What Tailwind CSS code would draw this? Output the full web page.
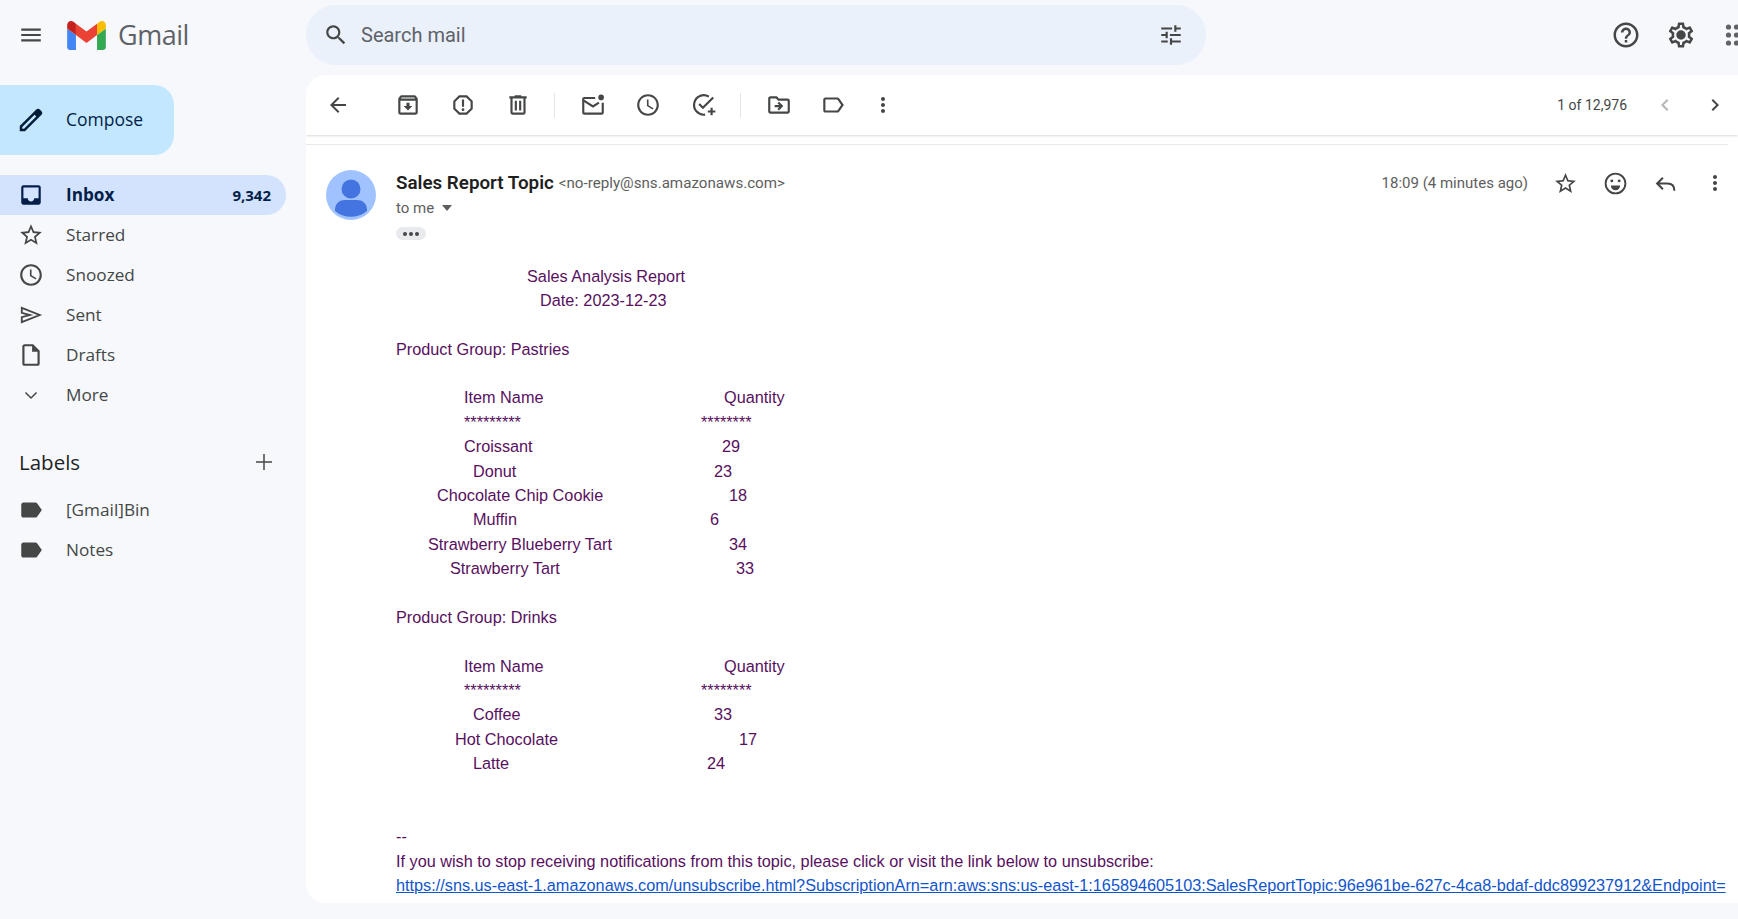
<!DOCTYPE html>
<html><head><meta charset="utf-8"><title>Gmail</title>
<script src="https://cdn.jsdelivr.net/npm/@tailwindcss/browser@4"></script></head>
<body class="w-[1738px] h-[919px] overflow-hidden bg-[#f6f8fc] font-['Roboto',sans-serif] text-[#202124]">
<header class="h-[70px] flex items-center">
  <div class="w-[306px] shrink-0 flex items-center">
    <svg class="ml-[18px] w-[26px] h-[26px] fill-[#444746]" viewBox="0 0 24 24"><path d="M3 18h18v-2H3v2zm0-5h18v-2H3v2zm0-7v2h18V6H3z"/></svg>
    <svg class="ml-[23px] w-[39px] h-[29px]" viewBox="52 42 88 66"><path fill="#4285f4" d="M58 108h14V74L52 59v43c0 3.32 2.69 6 6 6"/><path fill="#34a853" d="M120 108h14c3.32 0 6-2.69 6-6V59l-20 15"/><path fill="#fbbc04" d="M120 48v26l20-15v-8c0-7.42-8.47-11.65-14.4-7.2"/><path fill="#ea4335" d="M72 74V48l24 18 24-18v26L96 92"/><path fill="#c5221f" d="M52 51v8l20 15V48l-5.6-4.2c-5.94-4.45-14.4-.22-14.4 7.2"/></svg>
    <span class="ml-[12px] text-[27px] text-[#5f6368] font-['Open_Sans',sans-serif] tracking-[-0.5px]">Gmail</span>
  </div>
  <div class="w-[900px] h-[60px] rounded-full bg-[#eaf1fb] flex items-center">
    <svg class="ml-[17px] w-[26px] h-[26px] fill-[#444746]" viewBox="0 0 24 24"><path d="M15.5 14h-.79l-.28-.27C15.41 12.59 16 11.11 16 9.5 16 5.91 13.09 3 9.5 3S3 5.91 3 9.5 5.91 16 9.5 16c1.61 0 3.09-.59 4.23-1.57l.27.28v.79l5 4.99L20.49 19l-4.99-5zm-6 0C7.01 14 5 11.99 5 9.5S7.01 5 9.5 5 14 7.01 14 9.5 11.99 14 9.5 14z"/></svg>
    <span class="ml-[12px] text-[20px] text-[#5f6368]">Search mail</span>
    <svg class="ml-auto mr-[22px] w-[26px] h-[26px] fill-[#444746]" viewBox="0 0 24 24"><path d="M3 17v2h6v-2H3zM3 5v2h10V5H3zm10 16v-2h8v-2h-8v-2h-2v6h2zM7 9v2H3v2h4v2h2V9H7zm14 4v-2H11v2h10zm-6-4h2V7h4V5h-4V3h-2v6z"/></svg>
  </div>
  <div class="ml-auto flex items-center">
    <svg class="w-[30px] h-[30px] fill-[#444746]" viewBox="0 0 24 24"><path d="M11 18h2v-2h-2v2zm1-16C6.48 2 2 6.48 2 12s4.48 10 10 10 10-4.48 10-10S17.52 2 12 2zm0 18c-4.41 0-8-3.59-8-8s3.59-8 8-8 8 3.59 8 8-3.59 8-8 8zm0-14c-2.21 0-4 1.79-4 4h2c0-1.1.9-2 2-2s2 .9 2 2c0 2-3 1.75-3 5h2c0-2.25 3-2.5 3-5 0-2.21-1.79-4-4-4z"/></svg>
    <svg class="ml-[25px] w-[30px] h-[30px] fill-[#444746]" viewBox="0 0 24 24"><path d="M19.43 12.98c.04-.32.07-.64.07-.98 0-.34-.03-.66-.07-.98l2.11-1.65c.19-.15.24-.42.12-.64l-2-3.46c-.09-.16-.26-.25-.44-.25-.06 0-.12.01-.17.03l-2.49 1c-.52-.4-1.08-.73-1.69-.98l-.38-2.65C14.46 2.18 14.25 2 14 2h-4c-.25 0-.46.18-.49.42l-.38 2.65c-.61.25-1.17.59-1.69.98l-2.49-1c-.06-.02-.12-.03-.18-.03-.17 0-.34.09-.43.25l-2 3.46c-.13.22-.07.49.12.64l2.11 1.65c-.04.32-.07.65-.07.98 0 .33.03.66.07.98l-2.11 1.65c-.19.15-.24.42-.12.64l2 3.46c.09.16.26.25.44.25.06 0 .12-.01.17-.03l2.49-1c.52.4 1.08.73 1.69.98l.38 2.65c.03.24.24.42.49.42h4c.25 0 .46-.18.49-.42l.38-2.65c.61-.25 1.17-.59 1.69-.98l2.49 1c.06.02.12.03.18.03.17 0 .34-.09.43-.25l2-3.46c.12-.22.07-.49-.12-.64l-2.11-1.65zm-1.98-1.71c.04.31.05.52.05.73 0 .21-.02.43-.05.73l-.14 1.13.89.7 1.08.84-.7 1.21-1.27-.51-1.04-.42-.9.68c-.43.32-.84.56-1.25.73l-1.06.43-.16 1.13-.2 1.35h-1.4l-.19-1.35-.16-1.13-1.06-.43c-.43-.18-.83-.41-1.23-.71l-.91-.7-1.06.43-1.27.51-.7-1.21 1.08-.84.89-.7-.14-1.13c-.03-.31-.05-.54-.05-.74s.02-.43.05-.73l.14-1.13-.89-.7-1.08-.84.7-1.21 1.27.51 1.04.42.9-.68c.43-.32.84-.56 1.25-.73l1.06-.43.16-1.13.2-1.35h1.39l.19 1.35.16 1.13 1.06.43c.43.18.83.41 1.23.71l.91.7 1.06-.43 1.27-.51.7 1.21-1.07.85-.89.7.14 1.13zM12 8.2a3.8 3.8 0 100 7.6 3.8 3.8 0 000-7.6z"/></svg>
    <svg class="ml-[28px] mr-[-1px] w-[15px] h-[26px] fill-[#5f6368]" viewBox="0 0 15 26"><circle cx="4.5" cy="5" r="2.6"/><circle cx="12.5" cy="5" r="2.6"/><circle cx="4.5" cy="13" r="2.6"/><circle cx="12.5" cy="13" r="2.6"/><circle cx="4.5" cy="21" r="2.6"/><circle cx="12.5" cy="21" r="2.6"/></svg>
  </div>
</header>
<div class="flex">
  <aside class="w-[306px] shrink-0 font-['Open_Sans',sans-serif]">
    <div class="mt-[15px] w-[174px] h-[70px] rounded-r-[20px] bg-[#c2e7ff] flex items-center text-[#041e49] text-[17.5px] font-medium">
      <svg class="ml-[16px] w-[30px] h-[30px] fill-[#001d35]" viewBox="0 0 24 24"><path d="M20.41 4.94l-1.35-1.35c-.78-.78-2.05-.78-2.83 0L3 16.82V21h4.18L20.41 7.77c.79-.78.79-2.05 0-2.83zM6.41 19.06L5 19v-1.36l9.82-9.82 1.41 1.41-9.82 9.83z"/></svg>
      <span class="ml-[20px] mb-[2px]">Compose</span>
    </div>
    <nav class="mt-[20px] text-[17.2px] text-[#444746]">
      <div class="w-[286px] h-[40px] rounded-r-full bg-[#d3e3fd] flex items-center text-[#041e49] font-bold">
        <svg class="ml-[18px] w-[26px] h-[26px] fill-[#041e49]" viewBox="0 0 24 24"><path d="M19 3H5c-1.1 0-2 .9-2 2v14c0 1.1.9 2 2 2h14c1.1 0 2-.9 2-2V5c0-1.1-.9-2-2-2zm0 12h-4c0 1.66-1.35 3-3 3s-3-1.34-3-3H5V5h14v10z"/></svg>
        <span class="ml-[22px]">Inbox</span><span class="ml-auto mr-[15px] text-[15px]">9,342</span>
      </div>
      <div class="w-[286px] h-[40px] flex items-center">
        <svg class="ml-[18px] w-[26px] h-[26px] fill-[#444746]" viewBox="0 0 24 24"><path d="M22 9.24l-7.19-.62L12 2 9.19 8.63 2 9.24l5.46 4.73L5.82 21 12 17.27 18.18 21l-1.63-7.03L22 9.24zM12 15.4l-3.76 2.27 1-4.28-3.32-2.88 4.38-.38L12 6.1l1.71 4.04 4.38.38-3.32 2.88 1 4.28L12 15.4z"/></svg>
        <span class="ml-[22px]">Starred</span>
      </div>
      <div class="w-[286px] h-[40px] flex items-center">
        <svg class="ml-[18px] w-[26px] h-[26px] fill-[#444746]" viewBox="0 0 24 24"><path d="M11.99 2C6.47 2 2 6.48 2 12s4.47 10 9.99 10C17.52 22 22 17.52 22 12S17.52 2 11.99 2zM12 20c-4.42 0-8-3.58-8-8s3.58-8 8-8 8 3.58 8 8-3.58 8-8 8zm.5-13H11v6l5.25 3.15.75-1.23-4.5-2.67z"/></svg>
        <span class="ml-[22px]">Snoozed</span>
      </div>
      <div class="w-[286px] h-[40px] flex items-center">
        <svg class="ml-[18px] w-[26px] h-[26px] fill-none stroke-[#444746] stroke-[1.7]" viewBox="0 0 24 24"><path d="M3.5 5.5 20 12 3.5 18.5V14L11 12 3.5 10z"/></svg>
        <span class="ml-[22px]">Sent</span>
      </div>
      <div class="w-[286px] h-[40px] flex items-center">
        <svg class="ml-[18px] w-[26px] h-[26px] fill-[#444746]" viewBox="0 0 24 24"><path d="M14 2H6c-1.1 0-2 .9-2 2v16c0 1.1.9 2 2 2h12c1.1 0 2-.9 2-2V8l-6-6zM6 20V4h7v5h5v11H6z"/></svg>
        <span class="ml-[22px]">Drafts</span>
      </div>
      <div class="w-[286px] h-[40px] flex items-center">
        <svg class="ml-[18px] w-[26px] h-[26px] fill-[#444746]" viewBox="0 0 24 24"><path d="M7.4 9.2 12 13.8l4.6-4.6 1 1L12 15.8l-5.6-5.6z"/></svg>
        <span class="ml-[22px]">More</span>
      </div>
    </nav>
    <div class="mt-[27px] h-[40px] w-[286px] flex items-center text-[20.5px] text-[#1f1f1f]">
      <span class="ml-[19px]">Labels</span>
      <svg class="ml-auto mr-[10px] w-[24px] h-[24px] fill-[#444746]" viewBox="0 0 24 24"><path d="M20 12.75h-7.25V20h-1.5v-7.25H4v-1.5h7.25V4h1.5v7.25H20z"/></svg>
    </div>
    <div class="mt-[8px] text-[17.2px] text-[#444746]">
      <div class="w-[286px] h-[40px] flex items-center">
        <svg class="ml-[18px] w-[26px] h-[26px] fill-[#444746]" viewBox="0 0 24 24"><path d="M17.63 5.84C17.27 5.33 16.67 5 16 5L5 5.01C3.9 5.01 3 5.9 3 7v10c0 1.1.9 1.99 2 1.99L16 19c.67 0 1.27-.33 1.63-.84L22 12l-4.37-6.16z"/></svg>
        <span class="ml-[22px]">[Gmail]Bin</span>
      </div>
      <div class="w-[286px] h-[40px] flex items-center">
        <svg class="ml-[18px] w-[26px] h-[26px] fill-[#444746]" viewBox="0 0 24 24"><path d="M17.63 5.84C17.27 5.33 16.67 5 16 5L5 5.01C3.9 5.01 3 5.9 3 7v10c0 1.1.9 1.99 2 1.99L16 19c.67 0 1.27-.33 1.63-.84L22 12l-4.37-6.16z"/></svg>
        <span class="ml-[22px]">Notes</span>
      </div>
    </div>
  </aside>
  <main class="mt-[5px] w-[1432px] h-[828px] rounded-l-[20px] bg-white overflow-hidden">
    <div class="h-[60px] flex items-center shadow-[0_1px_2px_rgba(60,64,67,0.2)]">
      <div class="w-[64px] flex justify-center"><svg class="w-[24px] h-[24px] fill-[#444746]" viewBox="0 0 24 24"><path d="M20 11H7.83l5.59-5.59L12 4l-8 8 8 8 1.41-1.41L7.83 13H20v-2z"/></svg></div>
      <div class="ml-[10px] w-[55px] flex justify-center"><svg class="w-[26px] h-[26px] fill-[#444746]" viewBox="0 0 24 24"><path d="M20.54 5.23l-1.39-1.68C18.88 3.21 18.47 3 18 3H6c-.47 0-.88.21-1.16.55L3.46 5.23C3.17 5.57 3 6.02 3 6.5V19c0 1.1.9 2 2 2h14c1.1 0 2-.9 2-2V6.5c0-.48-.17-.93-.46-1.27zM6.24 5h11.52l.83 1H5.42l.82-1zM5 19V8h14v11H5zm8.45-9h-2.9v3H8l4 4 4-4h-2.55z"/></svg></div>
      <div class="w-[55px] flex justify-center"><svg class="w-[26px] h-[26px] fill-[#444746]" viewBox="0 0 24 24"><path d="M15.73 3H8.27L3 8.27v7.46L8.27 21h7.46L21 15.73V8.27L15.73 3zM19 14.9L14.9 19H9.1L5 14.9V9.1L9.1 5h5.8L19 9.1v5.8zM11 7h2v6.5h-2zM12 15a1.3 1.3 0 100 2.6 1.3 1.3 0 000-2.6z"/></svg></div>
      <div class="w-[55px] flex justify-center"><svg class="w-[26px] h-[26px] fill-[#444746]" viewBox="0 0 24 24"><path d="M15 4V3H9v1H4v2h1v13c0 1.1.9 2 2 2h10c1.1 0 2-.9 2-2V6h1V4h-5zm2 15H7V6h10v13zM9 8h2v9H9zm4 0h2v9h-2z"/></svg></div>
      <div class="ml-[9px] w-px h-[25px] bg-[#e3e5e8]"></div>
      <div class="ml-[10px] w-[55px] flex justify-center"><svg class="w-[26px] h-[26px] fill-none stroke-[#444746] stroke-2" viewBox="0 0 24 24"><path d="M14 5.5H4a1 1 0 00-1 1V19a1 1 0 001 1h16a1 1 0 001-1V10"/><path d="M3.5 8 12 13.3l5.5-3.5"/><circle cx="19.5" cy="5" r="2.6" class="fill-[#444746] stroke-0"/></svg></div>
      <div class="w-[55px] flex justify-center"><svg class="w-[26px] h-[26px] fill-[#444746]" viewBox="0 0 24 24"><path d="M11.99 2C6.47 2 2 6.48 2 12s4.47 10 9.99 10C17.52 22 22 17.52 22 12S17.52 2 11.99 2zM12 20c-4.42 0-8-3.58-8-8s3.58-8 8-8 8 3.58 8 8-3.58 8-8 8zm.5-13H11v6l5.25 3.15.75-1.23-4.5-2.67z"/></svg></div>
      <div class="w-[56px] flex justify-center"><svg class="ml-[2px] w-[26px] h-[26px] fill-none stroke-[#444746] stroke-2" viewBox="0 0 24 24"><path d="M16.5 4.3A9 9 0 1 0 13 20.9"/><path d="M7.5 11l3.5 3.5L20.5 5"/><path d="M19 14.5v7M15.5 18h7"/></svg></div>
      <div class="ml-[9px] w-px h-[25px] bg-[#e3e5e8]"></div>
      <div class="ml-[10px] w-[55px] flex justify-center"><svg class="w-[26px] h-[26px] fill-[#444746]" viewBox="0 0 24 24"><path d="M20 6h-8l-2-2H4c-1.1 0-1.99.9-1.99 2L2 18c0 1.1.9 2 2 2h16c1.1 0 2-.9 2-2V8c0-1.1-.9-2-2-2zm0 12H4V6h5.17l2 2H20v10zm-8.01-9l-1.41 1.41L12.16 12H8v2h4.16l-1.59 1.59L11.99 17 16 13.01 11.99 9z"/></svg></div>
      <div class="ml-[-1px] w-[55px] flex justify-center"><svg class="w-[26px] h-[26px] fill-[#444746]" viewBox="0 0 24 24"><path d="M17.63 5.84C17.27 5.33 16.67 5 16 5L5 5.01C3.9 5.01 3 5.9 3 7v10c0 1.1.9 1.99 2 1.99L16 19c.67 0 1.27-.33 1.63-.84L22 12l-4.37-6.16zM16 17H5V7h11l3.55 5L16 17z"/></svg></div>
      <div class="w-[45px] flex justify-center"><svg class="w-[24px] h-[24px] fill-[#444746]" viewBox="0 0 24 24"><path d="M12 8c1.1 0 2-.9 2-2s-.9-2-2-2-2 .9-2 2 .9 2 2 2zm0 2c-1.1 0-2 .9-2 2s.9 2 2 2 2-.9 2-2-.9-2-2-2zm0 6c-1.1 0-2 .9-2 2s.9 2 2 2 2-.9 2-2-.9-2-2-2z"/></svg></div>
      <span class="ml-auto mr-[13px] text-[14px] text-[#444746]">1 of 12,976</span>
      <div class="w-[50px] flex justify-center"><svg class="w-[24px] h-[24px] fill-[#b4b6b8]" viewBox="0 0 24 24"><path d="M15.41 7.41L14 6l-6 6 6 6 1.41-1.41L10.83 12z"/></svg></div>
      <div class="ml-[2px] w-[46px] flex justify-center"><svg class="w-[24px] h-[24px] fill-[#444746]" viewBox="0 0 24 24"><path d="M10 6L8.59 7.41 13.17 12l-4.58 4.58L10 18l6-6z"/></svg></div>
    </div>
    <div class="mt-[9px] mr-[10px] h-px bg-[#e8eaed]"></div>
    <div class="mt-[25px] flex">
      <svg class="ml-[20px] w-[50px] h-[50px] shrink-0" viewBox="0 0 50 50"><circle cx="25" cy="25" r="25" fill="#a0c3ff"/><circle cx="25" cy="19" r="9.5" fill="#4374e0"/><path d="M9 40c0-7 5-10 10-10h12c5 0 10 3 10 10v1a25 25 0 0 1-32 0z" fill="#4374e0"/></svg>
      <div class="ml-[20px] flex-1 pt-px">
        <div class="flex items-center h-[24px]">
          <span class="text-[18.8px] font-semibold text-[#1f1f1f]">Sales Report Topic</span>
          <span class="ml-[5px] text-[15.15px] text-[#5e5e5e]">&lt;no-reply@sns.amazonaws.com&gt;</span>
          <span class="ml-auto mr-[12px] text-[15px] text-[#5e5e5e]">18:09 (4 minutes ago)</span>
          <div class="w-[50px] flex justify-center"><svg class="w-[25px] h-[25px] fill-[#444746]" viewBox="0 0 24 24"><path d="M22 9.24l-7.19-.62L12 2 9.19 8.63 2 9.24l5.46 4.73L5.82 21 12 17.27 18.18 21l-1.63-7.03L22 9.24zM12 15.4l-3.76 2.27 1-4.28-3.32-2.88 4.38-.38L12 6.1l1.71 4.04 4.38.38-3.32 2.88 1 4.28L12 15.4z"/></svg></div>
          <div class="w-[50px] flex justify-center"><svg class="w-[25px] h-[25px]" viewBox="0 0 24 24"><circle cx="12" cy="12" r="9.5" fill="none" stroke="#444746" stroke-width="1.8"/><circle cx="8.5" cy="9.5" r="1.4" fill="#444746"/><circle cx="15.5" cy="9.5" r="1.4" fill="#444746"/><path d="M7.5 14h9a4.5 4.5 0 0 1-9 0z" fill="#444746"/></svg></div>
          <div class="w-[50px] flex justify-center"><svg class="w-[25px] h-[25px] fill-none stroke-[#444746] stroke-2" viewBox="0 0 24 24"><path d="M9.5 6.5 4 12l5.5 5.5M4 12h10c4 0 6.5 2.5 6.5 7"/></svg></div>
          <div class="w-[50px] mr-[-2px] flex justify-center"><svg class="w-[24px] h-[24px] fill-[#444746]" viewBox="0 0 24 24"><path d="M12 8c1.1 0 2-.9 2-2s-.9-2-2-2-2 .9-2 2 .9 2 2 2zm0 2c-1.1 0-2 .9-2 2s.9 2 2 2 2-.9 2-2-.9-2-2-2zm0 6c-1.1 0-2 .9-2 2s.9 2 2 2 2-.9 2-2-.9-2-2-2z"/></svg></div>
        </div>
        <div class="flex items-center h-[26px] text-[15px] text-[#5e5e5e]">to me<svg class="ml-[8px] w-[10px] h-[6px] fill-[#5e5e5e]" viewBox="0 0 12 7"><path d="M0 0h12L6 7z"/></svg></div>
        <div class="mt-[6px] w-[30px] h-[13px] rounded-full bg-[#e8eaed] flex items-center justify-center gap-[2px]"><i class="w-[4px] h-[4px] rounded-full bg-[#444746]"></i><i class="w-[4px] h-[4px] rounded-full bg-[#444746]"></i><i class="w-[4px] h-[4px] rounded-full bg-[#444746]"></i></div>
      </div>
    </div>
    <div class="mt-[23.5px] ml-[90px] text-[16.25px] leading-[24.38px] text-[#581060] font-['Liberation_Sans',sans-serif] whitespace-nowrap">
      <div class="pl-[131px]">Sales Analysis Report</div>
      <div class="pl-[144px]">Date: 2023-12-23</div>
      <div class="h-[24.38px]"></div>
      <div>Product Group: Pastries</div>
      <div class="h-[24.38px]"></div>
      <div class="flex"><span class="w-[280px] pl-[68px]">Item Name</span><span class="pl-[48px]">Quantity</span></div>
      <div class="flex"><span class="w-[280px] pl-[68px]">*********</span><span class="pl-[25px]">********</span></div>
      <div class="flex"><span class="w-[280px] pl-[68px]">Croissant</span><span class="pl-[46px]">29</span></div>
      <div class="flex"><span class="w-[280px] pl-[77px]">Donut</span><span class="pl-[38px]">23</span></div>
      <div class="flex"><span class="w-[280px] pl-[41px]">Chocolate Chip Cookie</span><span class="pl-[53px]">18</span></div>
      <div class="flex"><span class="w-[280px] pl-[77px]">Muffin</span><span class="pl-[34px]">6</span></div>
      <div class="flex"><span class="w-[280px] pl-[32px]">Strawberry Blueberry Tart</span><span class="pl-[53px]">34</span></div>
      <div class="flex"><span class="w-[280px] pl-[54px]">Strawberry Tart</span><span class="pl-[60px]">33</span></div>
      <div class="h-[24.38px]"></div>
      <div>Product Group: Drinks</div>
      <div class="h-[24.38px]"></div>
      <div class="flex"><span class="w-[280px] pl-[68px]">Item Name</span><span class="pl-[48px]">Quantity</span></div>
      <div class="flex"><span class="w-[280px] pl-[68px]">*********</span><span class="pl-[25px]">********</span></div>
      <div class="flex"><span class="w-[280px] pl-[77px]">Coffee</span><span class="pl-[38px]">33</span></div>
      <div class="flex"><span class="w-[280px] pl-[59px]">Hot Chocolate</span><span class="pl-[63px]">17</span></div>
      <div class="flex"><span class="w-[280px] pl-[77px]">Latte</span><span class="pl-[31px]">24</span></div>
      <div class="h-[48.76px]"></div>
      <div>--</div>
      <div>If you wish to stop receiving notifications from this topic, please click or visit the link below to unsubscribe:</div>
      <div class="text-[#1155cc] underline">https://sns.us-east-1.amazonaws.com/unsubscribe.html?SubscriptionArn=arn:aws:sns:us-east-1:165894605103:SalesReportTopic:96e961be-627c-4ca8-bdaf-ddc899237912&amp;Endpoint=</div>
    </div>
  </main>
</div>
</body></html>
